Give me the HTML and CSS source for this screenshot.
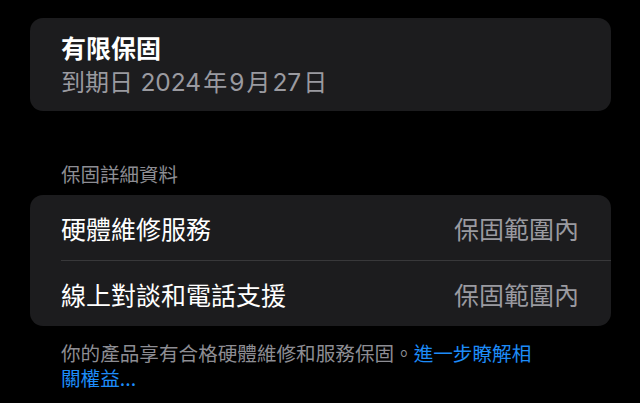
FILE: index.html
```html
<!DOCTYPE html>
<html lang="zh-Hant">
<head>
  <meta charset="UTF-8">
  <meta name="viewport" content="width=device-width, initial-scale=1.0">
  <title>保固</title>
  <link rel="stylesheet" href="styles.css">
</head>
<body>
  <div class="page">
    <div class="card summary">
      <div class="title">有限保固</div>
      <div class="subtitle">到期日 <span class="num">2024</span>年<span class="num">9</span>月<span class="num">27</span>日</div>
    </div>

    <div class="section-header">保固詳細資料</div>

    <div class="card list">
      <div class="row">
        <span class="label">硬體維修服務</span>
        <span class="value">保固範圍內</span>
      </div>
      <div class="row">
        <span class="label">線上對談和電話支援</span>
        <span class="value">保固範圍內</span>
      </div>
    </div>

    <p class="footer">你的產品享有合格硬體維修和服務保固。<a href="#">進一步瞭解相關權益...</a></p>
  </div>
</html>
```

FILE: styles.css
```css
body {
  margin: 0;
  background: #000;
  color: #fff;
  font-family: "Noto Sans CJK TC", "Noto Sans", sans-serif;
}
.page {
  padding: 18px 29px 0 30px;
}
.card {
  background: #1c1c1e;
  border-radius: 13px;
}
.summary {
  height: 68px;
  padding: 12px 31px 13px;
}
.title {
  font-size: 25px;
  line-height: 34px;
  font-weight: 700;
}
.subtitle {
  font-size: 24px;
  line-height: 34px;
  color: #9a9aa0;
}
.num {
  font-family: Inter, "Noto Sans", sans-serif;
  font-size: 24.5px;
  line-height: 1;
  margin: 0 2px;
}
.section-header {
  margin: 51px 0 9px 31px;
  font-size: 19.5px;
  line-height: 24px;
  color: #8d8d93;
}
.list {
  padding-left: 31px;
}
.row {
  display: flex;
  justify-content: space-between;
  align-items: center;
  height: 65px;
  padding-right: 32px;
  font-size: 25px;
}
.row + .row {
  border-top: 1px solid #38383a;
}
.value {
  color: #9a9aa0;
}
.footer {
  width: 478px;
  margin: 14px 0 0 31px;
  font-size: 19.6px;
  line-height: 25px;
  color: #8d8d93;
}
.footer a {
  color: #1d8cf8;
  text-decoration: none;
}
```
